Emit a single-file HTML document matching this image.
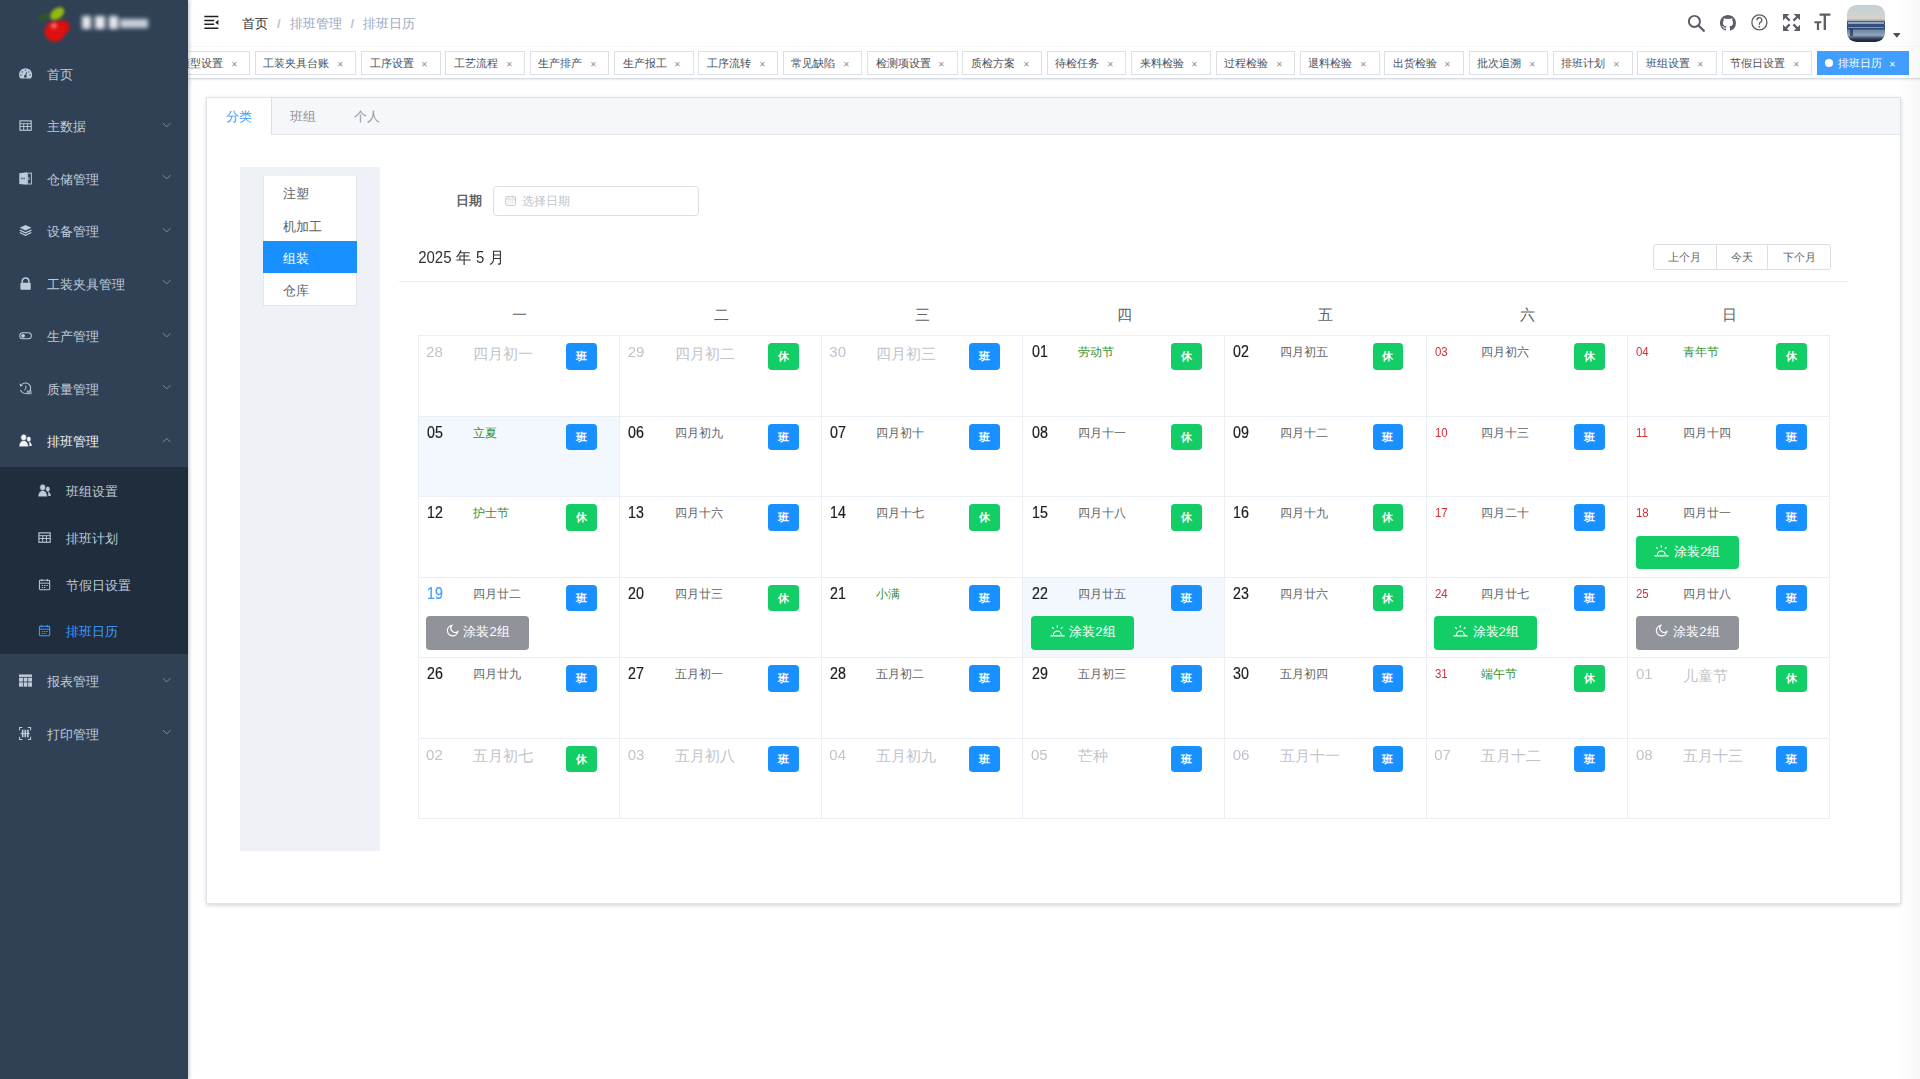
<!DOCTYPE html><html><head><meta charset="utf-8"><style>
*{box-sizing:border-box;margin:0;padding:0}
html,body{width:1920px;height:1079px;overflow:hidden;background:#fff}
body{font-family:"Liberation Sans",sans-serif;color:#303133}
#z{zoom:0.9375;width:2048px;height:1151px;position:relative;overflow:hidden;background:#fff}
.abs{position:absolute}
/* sidebar */
.sb{position:absolute;left:0;top:0;width:200px;height:1151px;background:#304156;box-shadow:1px 0 4px rgba(0,21,41,.28);z-index:5}
.logo{position:absolute;left:0;top:0;width:200px;height:50px}
.mi{position:absolute;left:0;width:200px;height:56px;color:#bfcbd9;font-size:14px}
.mi .ic{position:absolute;left:20px;top:21px;width:14px;height:14px}
.mi .tx{position:absolute;left:50px;top:2px;line-height:56px}
.mi .ar{position:absolute;left:172.5px;top:24px;width:10px;height:7px}
.sub{position:absolute;left:0;top:498px;width:200px;height:200px;background:#1f2d3d}
.si{position:absolute;left:0;width:200px;height:50px;color:#bfcbd9;font-size:14px}
.si .ic{position:absolute;left:40px;top:18px;width:14px;height:14px}
.si .tx{position:absolute;left:70px;top:2px;line-height:50px}
.si.act{color:#409eff}
/* navbar */
.nav{position:absolute;left:200px;top:0;width:1848px;height:50px;background:#fff;box-shadow:0 1px 4px rgba(0,21,41,.08)}
.bc{position:absolute;left:58px;top:1px;line-height:50px;font-size:14px;color:#97a8be}
.bc b{font-weight:normal;color:#303133}
.bc i{font-style:normal;color:#c0c4cc;margin:0 9.6px;font-weight:bold}
.tags{position:absolute;left:200px;top:50px;width:1848px;height:34px;background:#fff;border-bottom:1px solid #d8dce5;box-shadow:0 1px 3px 0 rgba(0,0,0,.12),0 0 3px 0 rgba(0,0,0,.04);overflow:hidden}
.tagrow{position:absolute;right:12px;top:0;white-space:nowrap;font-size:0}
.tg{display:inline-block;height:26px;line-height:24px;border:1px solid #dde0e7;color:#495060;background:#fff;padding:0 8px;font-size:12px;margin-left:5px;margin-top:4px;vertical-align:top}
.tg .x{display:inline-block;width:16px;height:16px;line-height:16px;text-align:center;font-size:9px;color:#909399;margin-left:3.9px}
.tg.act{background:#409eff;border-color:#409eff;color:#fff}
.tg.act .x{color:#fff}
.tg.act:before{content:'';display:inline-block;width:8px;height:8px;border-radius:50%;background:#fff;margin-right:5px;vertical-align:0px}
/* card */
.card{position:absolute;left:220px;top:103.5px;width:1808px;height:860.5px;background:#fff;border:1px solid #e0e3e9;box-shadow:0 2px 4px 0 rgba(0,0,0,.12),0 0 6px 0 rgba(0,0,0,.04)}
.thead{position:absolute;left:0;top:0;width:100%;height:39.3px;background:#f5f7fa;border-bottom:1px solid #e4e7ed}
.tab{position:absolute;top:0;height:38.3px;line-height:41px;overflow:hidden;padding:0 20px;font-size:14px;color:#909399}
.tab.act{background:#fff;color:#409eff;border-right:1px solid #dcdfe6;left:0;padding-left:20px;height:39.3px}
.panel{position:absolute;left:256px;top:178px;width:149px;height:730px;background:#eef1f6}
.list{position:absolute;left:280.4px;top:187.8px;width:100.5px;height:138.4px;background:#fff;border:1px solid #e3e6ec;border-top:0;border-bottom:1px solid #e3e6ec}
.li{height:34.6px;line-height:38.4px;overflow:hidden;padding-left:20px;font-size:14px;color:#606266}
.li.act{background:#1890ff;color:#fff;margin:0 -1px;padding-left:21px}
.flabel{position:absolute;left:458px;top:198.5px;width:68px;height:32px;line-height:32px;text-align:right;padding-right:12px;font-size:14px;font-weight:bold;color:#606266}
.finput{position:absolute;left:526px;top:198.5px;width:220px;height:32px;border:1px solid #dcdfe6;border-radius:4px;background:#fff}
.finput .ph{position:absolute;left:30px;top:0;line-height:30px;font-size:13px;color:#c0c4cc}
.finput svg{position:absolute;left:11.5px;top:8px}
.ctitle{position:absolute;left:446px;top:263px;line-height:24px;font-size:16px;transform:scaleY(1.04);transform-origin:0 17.3px;word-spacing:0.6px;color:#303133}
.bgrp{position:absolute;left:1763px;top:260.2px;height:28px;font-size:0;white-space:nowrap}
.btn{display:inline-block;height:28.3px;line-height:26.3px;padding:0 15.3px;font-size:12px;color:#606266;border:1px solid #dcdfe6;background:#fff;margin-right:-1px}
.btn:first-child{border-radius:3px 0 0 3px}
.btn:last-child{border-radius:0 3px 3px 0;margin-right:0}
.hr{position:absolute;left:426px;top:300px;width:1545px;height:1px;background:#ebeef5}
.wk{position:absolute;top:314px;height:44px;line-height:44px;width:215.07px;text-align:center;font-size:16px;color:#606266}
.cal{position:absolute;left:445.4px;top:357.5px;width:1506.6px;border-top:1px solid #ebeef5;border-left:1px solid #ebeef5}
.row{display:flex;height:85.85px}
.cell{position:relative;flex:1 1 0;border-right:1px solid #ebeef5;border-bottom:1px solid #ebeef5;height:85.85px}
.cell.sel{background:#f2f8fe}
.d{position:absolute;left:8.8px;top:8.5px;font-size:16px;line-height:18px;color:#1d1e20;-webkit-text-stroke:.2px;transform:scale(.95,1.1);transform-origin:0 14.3px}
.d.red{font-size:13px;color:#d4303a;-webkit-text-stroke:0;transform:scale(.94,1);left:8.6px}
.d.blue{color:#409eff}
.d.oth{color:#c0c4cc;-webkit-text-stroke:0;transform:scale(1,1.03);left:8px}
.lu{position:absolute;left:58px;top:8.8px;font-size:13px;line-height:18px;color:#606266}
.lu.hol{color:#35912f}
.lu.oth{font-size:16px;color:#c0c4cc;line-height:20px;top:9.3px}
.bd{position:absolute;left:157.2px;top:7.5px;width:33px;height:28.4px;line-height:28.4px;border-radius:4px;text-align:center;color:#fff;font-size:12px;font-weight:bold}
.bd.b{background:#1890ff}
.bd.g{background:#13ce66}
.sh{position:absolute;left:8px;top:41px;width:110px;height:36px;border-radius:4px;color:#fff;font-size:14px;line-height:35px;text-align:center}
.sh.g{background:#13ce66}
.sh.k{background:#909399}
.sh svg{vertical-align:-1.5px;margin-right:5px}
</style></head><body><div id="z">
<div class="sb">
<div class="logo">
<svg class="abs" style="left:0;top:0;filter:blur(1.6px)" width="100" height="50" viewBox="0 0 100 50"><path d="M42 22c2-4 6-6 10-5" stroke="#2c5a22" stroke-width="5" fill="none"/><ellipse cx="61" cy="14.5" rx="8.5" ry="5.5" transform="rotate(-38 61 14.5)" fill="#93b812"/><circle cx="67" cy="29" r="7.5" fill="#d40d0d"/><circle cx="58.5" cy="33.5" r="11" fill="#e11010"/><circle cx="57.5" cy="27.5" r="3" fill="#f46a6a"/></svg>
<div class="abs" style="left:0;top:0;width:200px;height:50px;filter:blur(2px)"><div class="abs" style="left:87px;top:17px;width:10px;height:14px;background:#e3e7ee"></div><div class="abs" style="left:101.5px;top:17px;width:10px;height:14px;background:#e6eaf0"></div><div class="abs" style="left:116px;top:17px;width:9.5px;height:14px;background:#e6eaf0"></div><div class="abs" style="left:128.5px;top:20.5px;width:29px;height:9px;background:#c9d0da"></div></div>
</div>
<div class="mi" style="top:50px"><svg class="ic" viewBox="0 0 14 14"><path d="M1.3 12.3A7 7 0 1 1 12.7 12.3z" fill="#bfcbd9"/><path d="M8.1 5.8 6.8 9.9" stroke="#304156" stroke-width="1.1"/><circle cx="6.8" cy="10" r="1.4" fill="#304156"/><circle cx="6.9" cy="3.3" r=".75" fill="#304156"/><circle cx="3.5" cy="5.2" r=".75" fill="#304156"/><circle cx="10.4" cy="5.2" r=".75" fill="#304156"/><circle cx="2.1" cy="8.5" r=".75" fill="#304156"/><circle cx="11.8" cy="8.5" r=".75" fill="#304156"/></svg><span class="tx">首页</span></div>
<div class="mi" style="top:106px"><svg class="ic" viewBox="0 0 14 14"><rect x="1" y="2" width="12" height="10" fill="none" stroke="#bfcbd9" stroke-width="1.2"/><path d="M1 5h12M1 8h12M5 5v7M9 5v7" stroke="#bfcbd9" stroke-width="1"/></svg><span class="tx">主数据</span><svg class="ar" viewBox="0 0 10 7"><path d="M1 1.2 5 5.2l4-4" fill="none" stroke="#8592a3" stroke-width="1"/></svg></div>
<div class="mi" style="top:162px"><svg class="ic" viewBox="0 0 14 14"><path d="M.3 1.2 8.5.3v13.4L.3 12.8z" fill="#bfcbd9"/><rect x="9.2" y="1.2" width="4" height="11.6" fill="none" stroke="#bfcbd9" stroke-width="1"/><circle cx="3" cy="6.8" r="1" fill="#5b6a80"/><circle cx="5.5" cy="6.8" r="1" fill="#5b6a80"/><path d="M10.5 5.5v3" stroke="#bfcbd9" stroke-width="1"/></svg><span class="tx">仓储管理</span><svg class="ar" viewBox="0 0 10 7"><path d="M1 1.2 5 5.2l4-4" fill="none" stroke="#8592a3" stroke-width="1"/></svg></div>
<div class="mi" style="top:218px"><svg class="ic" viewBox="0 0 14 14"><path d="M7 1 .8 4 7 7l6.2-3z" fill="#bfcbd9"/><path d="M.8 6.5 7 9.5l6.2-3M.8 9 7 12l6.2-3" fill="none" stroke="#bfcbd9" stroke-width="1.3"/></svg><span class="tx">设备管理</span><svg class="ar" viewBox="0 0 10 7"><path d="M1 1.2 5 5.2l4-4" fill="none" stroke="#8592a3" stroke-width="1"/></svg></div>
<div class="mi" style="top:274px"><svg class="ic" viewBox="0 0 14 14"><path d="M3.5 6V4.5a3.5 3.5 0 0 1 7 0V6" fill="none" stroke="#bfcbd9" stroke-width="1.6"/><rect x="1.5" y="6" width="11" height="7.5" rx=".5" fill="#bfcbd9"/></svg><span class="tx">工装夹具管理</span><svg class="ar" viewBox="0 0 10 7"><path d="M1 1.2 5 5.2l4-4" fill="none" stroke="#8592a3" stroke-width="1"/></svg></div>
<div class="mi" style="top:330px"><svg class="ic" viewBox="0 0 14 14"><rect x=".8" y="4" width="12.4" height="6.5" rx="3.25" fill="none" stroke="#bfcbd9" stroke-width="1.1"/><circle cx="4.3" cy="7.25" r="2" fill="#bfcbd9"/></svg><span class="tx">生产管理</span><svg class="ar" viewBox="0 0 10 7"><path d="M1 1.2 5 5.2l4-4" fill="none" stroke="#8592a3" stroke-width="1"/></svg></div>
<div class="mi" style="top:386px"><svg class="ic" viewBox="0 0 14 14"><path d="M3 2.6A5.6 5.6 0 1 1 1.6 8.5" fill="none" stroke="#bfcbd9" stroke-width="1.1"/><path d="M.6 1.6 1.2 5l3-1.2z" fill="#bfcbd9"/><path d="M7.3 3.8v3.4L5.4 8.6" fill="none" stroke="#bfcbd9" stroke-width="1"/><rect x="8.3" y="9.2" width="5" height="3.8" fill="#bfcbd9"/><path d="M8.3 10.5h5M8.3 11.8h5" stroke="#304156" stroke-width=".5"/></svg><span class="tx">质量管理</span><svg class="ar" viewBox="0 0 10 7"><path d="M1 1.2 5 5.2l4-4" fill="none" stroke="#8592a3" stroke-width="1"/></svg></div>
<div class="mi" style="top:442px;color:#f4f4f5"><svg class="ic" viewBox="0 0 14 14"><ellipse cx="10.5" cy="5.4" rx="2" ry="2.8" fill="#f4f4f5"/><path d="M10.8 8.2c1.6.5 2.8 2.3 2.8 4.6h-2.5z" fill="#f4f4f5"/><ellipse cx="5" cy="3.6" rx="3.1" ry="3.4" fill="#f4f4f5" stroke="#304156" stroke-width=".6"/><path d="M0 13.7c0-4 2.2-6.8 5-6.8s5 2.8 5 6.8z" fill="#f4f4f5" stroke="#304156" stroke-width=".6"/></svg><span class="tx">排班管理</span><svg class="ar" viewBox="0 0 10 7"><path d="M1 5.5 5 1.5l4 4" fill="none" stroke="#8592a3" stroke-width="1"/></svg></div>
<div class="mi" style="top:698px"><svg class="ic" viewBox="0 0 14 14"><path d="M0 .5h14v13H0z" fill="#bfcbd9"/><path d="M0 3.6h14M0 8.5h14M4.7 3.6v10M9.3 3.6v10" stroke="#304156" stroke-width=".9"/></svg><span class="tx">报表管理</span><svg class="ar" viewBox="0 0 10 7"><path d="M1 1.2 5 5.2l4-4" fill="none" stroke="#8592a3" stroke-width="1"/></svg></div>
<div class="mi" style="top:754px"><svg class="ic" viewBox="0 0 14 14"><path d="M.6 3.5V.6h3M9.4.6h3v2.9M12.4 10.5v2.9h-3M3.6 13.4H.6v-2.9" fill="none" stroke="#bfcbd9" stroke-width="1.1"/><path d="M3 3h1.8v8H3zM5.8 3h1.8v8H5.8zM8.6 3h1.8v8H8.6z" fill="#bfcbd9"/><path d="M1.5 7h10" stroke="#bfcbd9" stroke-width="1"/></svg><span class="tx">打印管理</span><svg class="ar" viewBox="0 0 10 7"><path d="M1 1.2 5 5.2l4-4" fill="none" stroke="#8592a3" stroke-width="1"/></svg></div>
<div class="sub">
<div class="si" style="top:0px"><svg class="ic" viewBox="0 0 14 14"><ellipse cx="10.5" cy="5.4" rx="2" ry="2.8" fill="#bfcbd9"/><path d="M10.8 8.2c1.6.5 2.8 2.3 2.8 4.6h-2.5z" fill="#bfcbd9"/><ellipse cx="5" cy="3.6" rx="3.1" ry="3.4" fill="#bfcbd9" stroke="#1f2d3d" stroke-width=".6"/><path d="M0 13.7c0-4 2.2-6.8 5-6.8s5 2.8 5 6.8z" fill="#bfcbd9" stroke="#1f2d3d" stroke-width=".6"/></svg><span class="tx">班组设置</span></div>
<div class="si" style="top:50px"><svg class="ic" viewBox="0 0 14 14"><rect x="1" y="2" width="12" height="10" fill="none" stroke="#bfcbd9" stroke-width="1.2"/><path d="M1 5h12M1 8h12M5 5v7M9 5v7" stroke="#bfcbd9" stroke-width="1"/></svg><span class="tx">排班计划</span></div>
<div class="si" style="top:100px"><svg class="ic" viewBox="0 0 14 14"><rect x="1.5" y="2.5" width="11" height="10" rx="1" fill="none" stroke="#bfcbd9" stroke-width="1.1"/><path d="M1.5 5.5h11M4 1v2.5M10 1v2.5M4 8h1.5M6.5 8h1.5M9 8h1.5M4 10.2h1.5M6.5 10.2h1.5" stroke="#bfcbd9" stroke-width="1"/></svg><span class="tx">节假日设置</span></div>
<div class="si act" style="top:150px"><svg class="ic" viewBox="0 0 14 14"><rect x="1.5" y="2.5" width="11" height="10" rx="1" fill="none" stroke="#409eff" stroke-width="1.1"/><path d="M1.5 5.5h11M4 1v2.5M10 1v2.5M4 8h1.5M6.5 8h1.5M9 8h1.5M4 10.2h1.5M6.5 10.2h1.5" stroke="#409eff" stroke-width="1"/></svg><span class="tx">排班日历</span></div>
</div></div>
<div class="nav">
<svg class="abs" style="left:15px;top:14px" width="20" height="20" viewBox="0 0 20 20"><path d="M2.5 3.8h15M2.5 8h10.5M2.5 12h10.5M2.5 16.2h15" stroke="#1f1f1f" stroke-width="1.5"/><path d="M17.5 7.2v5.6l-3.4-2.8z" fill="#1f1f1f"/></svg>
<div class="bc"><b>首页</b><i>/</i>排班管理<i>/</i>排班日历</div>
<svg class="abs" style="left:1599px;top:15px" width="20" height="20" viewBox="0 0 20 20"><circle cx="7.9" cy="7.9" r="5.9" fill="none" stroke="#5a5e66" stroke-width="2.1"/><path d="M12.3 12.3 17.9 17.9" stroke="#5a5e66" stroke-width="2.5" stroke-linecap="round"/></svg>
<svg class="abs" style="left:1634.6px;top:15.6px" width="17" height="17" viewBox="0 0 16 16"><path fill="#5a5e66" d="M8 0C3.58 0 0 3.58 0 8c0 3.54 2.29 6.530 5.47 7.59.4.07.55-.17.55-.38 0-.19-.01-.82-.01-1.49-2.01.37-2.53-.49-2.690-.94-.09-.23-.48-.94-.82-1.13-.28-.15-.68-.52-.01-.53.63-.01 1.08.58 1.23.82.72 1.21 1.87.87 2.33.66.07-.52.28-.87.51-1.07-1.78-.2-3.64-.89-3.64-3.95 0-.87.31-1.59.82-2.15-.08-.2-.36-1.02.08-2.12 0 0 .67-.21 2.2.82.64-.18 1.32-.27 2-.27.68 0 1.36.09 2 .27 1.53-1.04 2.2-.82 2.2-.82.44 1.1.16 1.92.08 2.12.51.56.82 1.27.82 2.15 0 3.07-1.87 3.75-3.65 3.95.29.25.54.73.54 1.48 0 1.07-.01 1.93-.01 2.2 0 .21.15.46.55.38A8.013 8.013 0 0 0 16 8c0-4.420-3.58-8-8-8z"/></svg>
<svg class="abs" style="left:1666.6px;top:13.8px" width="20" height="20" viewBox="0 0 20 20"><circle cx="10" cy="10" r="8" fill="none" stroke="#5a5e66" stroke-width="1.4"/><path d="M7.4 7.7a2.6 2.6 0 1 1 3.7 2.3c-.7.4-1.1.9-1.1 1.7v.7" fill="none" stroke="#5a5e66" stroke-width="1.4"/><circle cx="10" cy="14.6" r=".9" fill="#5a5e66"/></svg>
<svg class="abs" style="left:1701.7px;top:15.2px" width="18.2" height="18.2" viewBox="0 0 20 20"><path d="M0 0h7.5L0 7.5zM20 0v7.5L12.5 0zM0 20v-7.5L7.5 20zM20 20h-7.5L20 12.5z" fill="#5a5e66"/><path d="M2 2 7.8 7.8M18 2l-5.8 5.8M2 18l5.8-5.8M18 18l-5.8-5.8" stroke="#5a5e66" stroke-width="2.6"/></svg>
<svg class="abs" style="left:1730px;top:10px" width="30" height="30" viewBox="0 0 30 30"><path d="M11.3 4.8h11.5v2.5H11.3zM15.6 4.8h2.5v17.7h-2.5zM5.8 13h7.4v2.2H5.8zM8.4 13h2.3v9.5H8.4z" fill="#5a5e66"/></svg>
<div class="abs" style="left:1770.5px;top:4.9px;width:40px;height:40px;border-radius:10px;overflow:hidden;background:linear-gradient(#c4cfd6 0%,#cfd3d3 25%,#d9d2c9 37%,#a3aab5 42%,#3c5984 45%,#33507e 55%,#2e4a78 65%,#6f87a3 68%,#90a5b9 82%,#56657e 87%,#252e48 94%,#1e2640 100%)">
<div class="abs" style="left:1px;top:18.6px;width:38px;height:1.6px;background:#e9eef5;opacity:.5;filter:blur(.4px)"></div>
<div class="abs" style="left:1px;top:23.8px;width:38px;height:1.4px;background:#e9eef5;opacity:.45;filter:blur(.4px)"></div>
<div class="abs" style="left:2.5px;top:25.5px;width:3px;height:8px;background:#15203a;opacity:.6;filter:blur(.5px)"></div>
</div>
<svg class="abs" style="left:1819px;top:35px" width="8" height="5" viewBox="0 0 8 5"><path d="M0 0h8L4 5z" fill="#4a4d52"/></svg>
</div>
<div class="tags"><div class="tagrow"><span class="tg">模型设置<span class="x">✕</span></span><span class="tg">工装夹具台账<span class="x">✕</span></span><span class="tg">工序设置<span class="x">✕</span></span><span class="tg">工艺流程<span class="x">✕</span></span><span class="tg">生产排产<span class="x">✕</span></span><span class="tg">生产报工<span class="x">✕</span></span><span class="tg">工序流转<span class="x">✕</span></span><span class="tg">常见缺陷<span class="x">✕</span></span><span class="tg">检测项设置<span class="x">✕</span></span><span class="tg">质检方案<span class="x">✕</span></span><span class="tg">待检任务<span class="x">✕</span></span><span class="tg">来料检验<span class="x">✕</span></span><span class="tg">过程检验<span class="x">✕</span></span><span class="tg">退料检验<span class="x">✕</span></span><span class="tg">出货检验<span class="x">✕</span></span><span class="tg">批次追溯<span class="x">✕</span></span><span class="tg">排班计划<span class="x">✕</span></span><span class="tg">班组设置<span class="x">✕</span></span><span class="tg">节假日设置<span class="x">✕</span></span><span class="tg act">排班日历<span class="x">✕</span></span></div></div>
<div class="card"><div class="thead"><div class="tab act">分类</div><div class="tab" style="left:68px">班组</div><div class="tab" style="left:136px">个人</div></div></div>
<div class="panel"></div>
<div class="list"><div class="li">注塑</div><div class="li">机加工</div><div class="li act">组装</div><div class="li">仓库</div></div>
<div class="flabel">日期</div>
<div class="finput"><svg width="12" height="12" viewBox="0 0 14 14"><rect x="1" y="2" width="12" height="11" rx="1" fill="none" stroke="#c0c4cc" stroke-width="1.1"/><path d="M1 5h12M4 1v2.5M10 1v2.5M3.5 7.5h1.5M6.2 7.5h1.5M9 7.5h1.5M3.5 10h1.5M6.2 10h1.5M9 10h1.5" stroke="#c0c4cc" stroke-width="1"/></svg><span class="ph">选择日期</span></div>
<div class="ctitle">2025 年 5 月</div>
<div class="bgrp"><span class="btn">上个月</span><span class="btn">今天</span><span class="btn">下个月</span></div>
<div class="hr"></div>
<div class="wk" style="left:446.50px">一</div>
<div class="wk" style="left:661.57px">二</div>
<div class="wk" style="left:876.64px">三</div>
<div class="wk" style="left:1091.71px">四</div>
<div class="wk" style="left:1306.78px">五</div>
<div class="wk" style="left:1521.85px">六</div>
<div class="wk" style="left:1736.92px">日</div>
<div class="cal">
<div class="row">
<div class="cell"><span class="d oth">28</span><span class="lu oth">四月初一</span><span class="bd b">班</span></div>
<div class="cell"><span class="d oth">29</span><span class="lu oth">四月初二</span><span class="bd g">休</span></div>
<div class="cell"><span class="d oth">30</span><span class="lu oth">四月初三</span><span class="bd b">班</span></div>
<div class="cell"><span class="d">01</span><span class="lu hol">劳动节</span><span class="bd g">休</span></div>
<div class="cell"><span class="d">02</span><span class="lu">四月初五</span><span class="bd g">休</span></div>
<div class="cell"><span class="d red">03</span><span class="lu">四月初六</span><span class="bd g">休</span></div>
<div class="cell"><span class="d red">04</span><span class="lu hol">青年节</span><span class="bd g">休</span></div>
</div>
<div class="row">
<div class="cell sel"><span class="d">05</span><span class="lu hol">立夏</span><span class="bd b">班</span></div>
<div class="cell"><span class="d">06</span><span class="lu">四月初九</span><span class="bd b">班</span></div>
<div class="cell"><span class="d">07</span><span class="lu">四月初十</span><span class="bd b">班</span></div>
<div class="cell"><span class="d">08</span><span class="lu">四月十一</span><span class="bd g">休</span></div>
<div class="cell"><span class="d">09</span><span class="lu">四月十二</span><span class="bd b">班</span></div>
<div class="cell"><span class="d red">10</span><span class="lu">四月十三</span><span class="bd b">班</span></div>
<div class="cell"><span class="d red">11</span><span class="lu">四月十四</span><span class="bd b">班</span></div>
</div>
<div class="row">
<div class="cell"><span class="d">12</span><span class="lu hol">护士节</span><span class="bd g">休</span></div>
<div class="cell"><span class="d">13</span><span class="lu">四月十六</span><span class="bd b">班</span></div>
<div class="cell"><span class="d">14</span><span class="lu">四月十七</span><span class="bd g">休</span></div>
<div class="cell"><span class="d">15</span><span class="lu">四月十八</span><span class="bd g">休</span></div>
<div class="cell"><span class="d">16</span><span class="lu">四月十九</span><span class="bd g">休</span></div>
<div class="cell"><span class="d red">17</span><span class="lu">四月二十</span><span class="bd b">班</span></div>
<div class="cell"><span class="d red">18</span><span class="lu">四月廿一</span><span class="bd b">班</span><div class="sh g"><svg width="16" height="14" viewBox="0 0 16 14"><path d="M.5 12.6h15" stroke="#fff" stroke-width="1.4"/><path d="M3.6 11.6a4.2 4.2 0 0 1 8.4 0" fill="none" stroke="#fff" stroke-width="1.2"/><path d="M7.8 1.3v2.8M2.3 3.4l1.7 1.8M13.3 3.4l-1.7 1.8" stroke="#fff" stroke-width="1.2"/></svg>涂装2组</div></div>
</div>
<div class="row">
<div class="cell"><span class="d blue">19</span><span class="lu">四月廿二</span><span class="bd b">班</span><div class="sh k"><svg width="14" height="14" viewBox="0 0 14 14"><path d="M6.2 1.5A5.6 5.6 0 1 0 12.6 8 4.6 4.6 0 0 1 6.2 1.5z" fill="none" stroke="#fff" stroke-width="1.3"/></svg>涂装2组</div></div>
<div class="cell"><span class="d">20</span><span class="lu">四月廿三</span><span class="bd g">休</span></div>
<div class="cell"><span class="d">21</span><span class="lu hol">小满</span><span class="bd b">班</span></div>
<div class="cell sel"><span class="d">22</span><span class="lu">四月廿五</span><span class="bd b">班</span><div class="sh g"><svg width="16" height="14" viewBox="0 0 16 14"><path d="M.5 12.6h15" stroke="#fff" stroke-width="1.4"/><path d="M3.6 11.6a4.2 4.2 0 0 1 8.4 0" fill="none" stroke="#fff" stroke-width="1.2"/><path d="M7.8 1.3v2.8M2.3 3.4l1.7 1.8M13.3 3.4l-1.7 1.8" stroke="#fff" stroke-width="1.2"/></svg>涂装2组</div></div>
<div class="cell"><span class="d">23</span><span class="lu">四月廿六</span><span class="bd g">休</span></div>
<div class="cell"><span class="d red">24</span><span class="lu">四月廿七</span><span class="bd b">班</span><div class="sh g"><svg width="16" height="14" viewBox="0 0 16 14"><path d="M.5 12.6h15" stroke="#fff" stroke-width="1.4"/><path d="M3.6 11.6a4.2 4.2 0 0 1 8.4 0" fill="none" stroke="#fff" stroke-width="1.2"/><path d="M7.8 1.3v2.8M2.3 3.4l1.7 1.8M13.3 3.4l-1.7 1.8" stroke="#fff" stroke-width="1.2"/></svg>涂装2组</div></div>
<div class="cell"><span class="d red">25</span><span class="lu">四月廿八</span><span class="bd b">班</span><div class="sh k"><svg width="14" height="14" viewBox="0 0 14 14"><path d="M6.2 1.5A5.6 5.6 0 1 0 12.6 8 4.6 4.6 0 0 1 6.2 1.5z" fill="none" stroke="#fff" stroke-width="1.3"/></svg>涂装2组</div></div>
</div>
<div class="row">
<div class="cell"><span class="d">26</span><span class="lu">四月廿九</span><span class="bd b">班</span></div>
<div class="cell"><span class="d">27</span><span class="lu">五月初一</span><span class="bd b">班</span></div>
<div class="cell"><span class="d">28</span><span class="lu">五月初二</span><span class="bd b">班</span></div>
<div class="cell"><span class="d">29</span><span class="lu">五月初三</span><span class="bd b">班</span></div>
<div class="cell"><span class="d">30</span><span class="lu">五月初四</span><span class="bd b">班</span></div>
<div class="cell"><span class="d red">31</span><span class="lu hol">端午节</span><span class="bd g">休</span></div>
<div class="cell"><span class="d oth">01</span><span class="lu oth">儿童节</span><span class="bd g">休</span></div>
</div>
<div class="row">
<div class="cell"><span class="d oth">02</span><span class="lu oth">五月初七</span><span class="bd g">休</span></div>
<div class="cell"><span class="d oth">03</span><span class="lu oth">五月初八</span><span class="bd b">班</span></div>
<div class="cell"><span class="d oth">04</span><span class="lu oth">五月初九</span><span class="bd b">班</span></div>
<div class="cell"><span class="d oth">05</span><span class="lu oth">芒种</span><span class="bd b">班</span></div>
<div class="cell"><span class="d oth">06</span><span class="lu oth">五月十一</span><span class="bd b">班</span></div>
<div class="cell"><span class="d oth">07</span><span class="lu oth">五月十二</span><span class="bd b">班</span></div>
<div class="cell"><span class="d oth">08</span><span class="lu oth">五月十三</span><span class="bd b">班</span></div>
</div>
</div>
<div class="abs" style="right:0;top:0;width:26px;height:1151px;background:linear-gradient(to right,rgba(0,0,0,0),rgba(0,0,0,.028));z-index:20"></div></div></body></html>
